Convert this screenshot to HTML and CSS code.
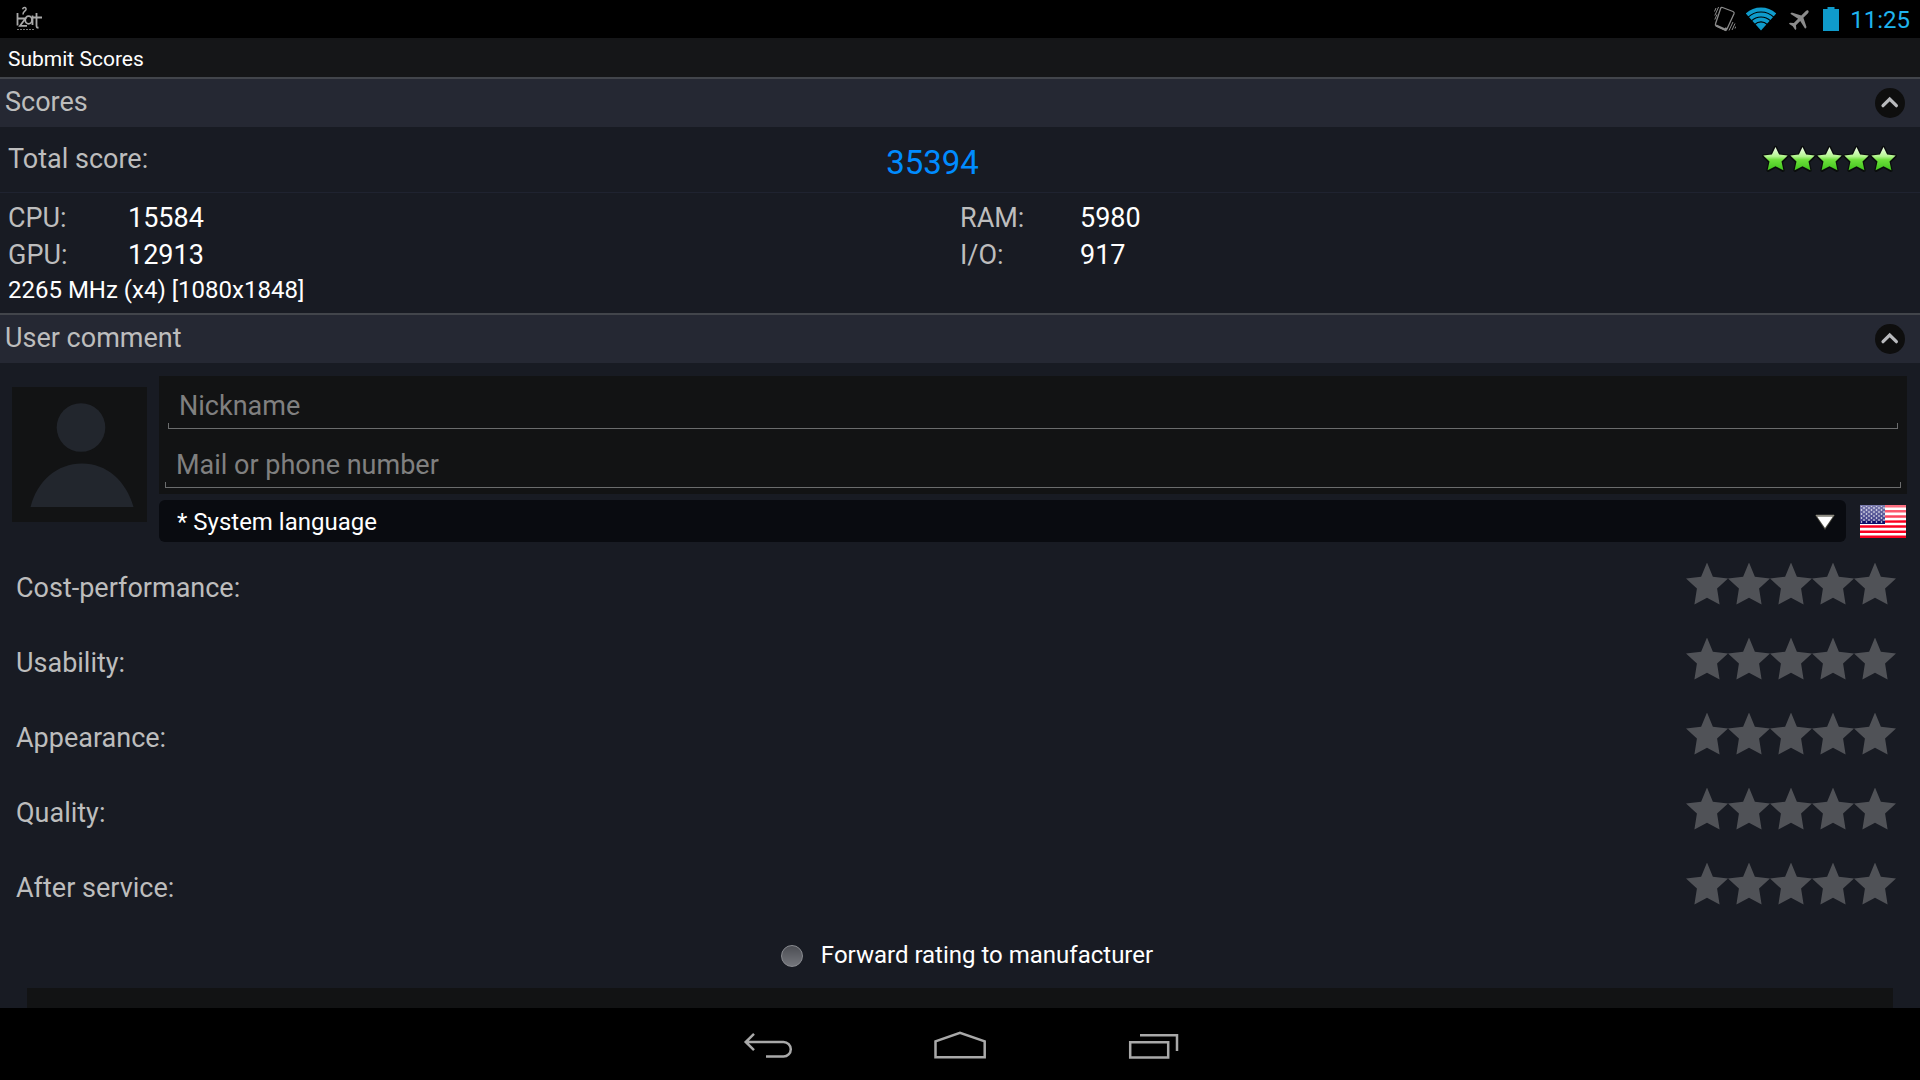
FILE: index.html
```html
<!DOCTYPE html>
<html lang="en">
<head>
<meta charset="utf-8">
<meta name="viewport" content="width=device-width, initial-scale=1">
<title>Submit Scores</title>
<link rel="stylesheet" href="styles.css">
</head>
<body>
<svg class="defs" aria-hidden="true">
  <defs>
    <linearGradient id="green" x1="0" y1="0" x2="0" y2="1">
      <stop offset="0" stop-color="#f4ffec"/>
      <stop offset=".4" stop-color="#b4f590"/>
      <stop offset=".55" stop-color="#6ee03c"/>
      <stop offset="1" stop-color="#3fc41c"/>
    </linearGradient>
    <symbol id="star" viewBox="0 0 27 30">
      <path d="M13.5 2.5l3.4 7.6 8.3.9-6.1 5.8 1.8 8.4-7.4-4.2-7.4 4.2 1.8-8.4L1.8 11l8.3-.9z" fill="none" stroke="#050805" stroke-width="3.4" stroke-linejoin="round" opacity=".75"/>
      <path d="M13.5 2l3.6 7.600 8.600.900-6.200 6 1.900 8.700-7.900-4-7.900 4 1.900-8.700L1.300 10.500l8.600-.900z" fill="url(#green)"/>
    </symbol>
    <symbol id="chevron" viewBox="0 0 30 30">
      <path d="M8 17.700l6.700-6.700 6.700 6.700" fill="none" stroke="#b9babd" stroke-width="3.200" stroke-linecap="round"/>
    </symbol>
  </defs>
</svg>

<header class="status">
  <svg class="status-logo" width="26" height="26" viewBox="0 0 26 26" fill="none" stroke="#a9a9a9" stroke-width="1.8" role="img" aria-label="IZat">
    <path d="M1.500 7v12.500M2 12.500h7.500L4 19.800h7"/>
    <ellipse cx="12.600" cy="14" rx="3.400" ry="3.800"/>
    <path d="M16.500 9.500v9.500M20.500 7v12.500c0 1.800.6 2.300 2 2M17 11.500H26"/>
    <path d="M6.500 3.200c1-2.500 4-2 3.500.300C9.500 5.500 7 5 7 8.500" stroke-width="1.500"/>
    <path d="M1 23.500h17" stroke-width="1.200" stroke-dasharray="2 1" opacity=".7"/>
  </svg>
  <div class="status-icons">
    <svg width="22" height="26" viewBox="0 0 22 26" fill="none" stroke="#8b8b8b" role="img" aria-label="Vibrate">
      <path d="M8.500 1.500l10.500 4q1.600.7 1 2.200L13 23q-.7 1.500-2.200 1L2.300 20q-1.400-.7-.8-2.200L6.700 2.300q.5-1.300 1.800-.8z" stroke-width="1.300"/>
      <path d="M2 19.500l9.500 4.200 1-2" stroke-width="2.200"/>
      <path d="M.5 5.500l1.500-3.500M.8 9.500L4.600 1M.8 13.500L3 8.500M15 24.500l4-8.500M18 24l3-6.500M21 22.500l.8-2"/>
    </svg>
    <svg width="30" height="24" viewBox="0 0 30 24" role="img" aria-label="Wi-Fi">
      <clipPath id="fan"><path d="M15 23.500L-3 3.500V-2H33V3.500z"/></clipPath>
      <g clip-path="url(#fan)" fill="none" stroke="#0f9bcb" stroke-width="3.800">
        <circle cx="15" cy="23.500" r="21"/>
        <circle cx="15" cy="23.500" r="16"/>
        <circle cx="15" cy="23.500" r="11.200"/>
        <circle cx="15" cy="23.500" r="4" stroke-width="8"/>
      </g>
    </svg>
    <svg width="27" height="27" viewBox="0 0 27 27" role="img" aria-label="Airplane mode">
      <path transform="rotate(45 13.500 13.500) translate(2 1)" fill="#8b8b8b" d="M22 15v-2L13 8.500V2c0-1-.67-2-1.500-2S10 1 10 2v6.500L1 13v2l9-2V19l-3 2.500v1.500l4.500-1 4.500 1v-1.500L13 19v-6z"/>
    </svg>
    <svg width="16" height="24" viewBox="0 0 16 24" role="img" aria-label="Battery full">
      <path fill="#0f9bcb" d="M4.500 0h7v2H16v22H0V2h4.500z"/>
    </svg>
    <time class="clock">11:25</time>
  </div>
</header>

<h1 class="title">Submit Scores</h1>

<main class="content">
  <section>
    <div class="section-head">
      <h2>Scores</h2>
      <button class="collapse" type="button" aria-label="Collapse scores"><svg width="30" height="30"><use href="#chevron"/></svg></button>
    </div>
    <div class="total">
      <span class="label">Total score:</span>
      <output class="total-value">35394</output>
      <div class="total-stars" role="img" aria-label="5 of 5 stars">
        <svg width="27" height="30"><use href="#star"/></svg>
        <svg width="27" height="30"><use href="#star"/></svg>
        <svg width="27" height="30"><use href="#star"/></svg>
        <svg width="27" height="30"><use href="#star"/></svg>
        <svg width="27" height="30"><use href="#star"/></svg>
      </div>
    </div>
    <div class="details">
      <dl class="metrics">
        <div class="metric"><dt>CPU:</dt><dd>15584</dd></div>
        <div class="metric"><dt>RAM:</dt><dd>5980</dd></div>
        <div class="metric"><dt>GPU:</dt><dd>12913</dd></div>
        <div class="metric"><dt>I/O:</dt><dd>917</dd></div>
      </dl>
      <p class="device">2265 MHz (x4) [1080x1848]</p>
    </div>
  </section>

  <section>
    <div class="section-head">
      <h2>User comment</h2>
      <button class="collapse" type="button" aria-label="Collapse user comment"><svg width="30" height="30"><use href="#chevron"/></svg></button>
    </div>
    <form class="comment">
      <div class="profile">
        <button class="avatar" type="button" aria-label="Choose a picture">
          <svg width="135" height="135" viewBox="0 0 135 135" fill="#22262d">
            <circle cx="69" cy="40.500" r="24.300"/>
            <path d="M18.500 120C25 94 45 76.500 70 76.500S114 94 121.500 120z"/>
          </svg>
        </button>
        <div class="identity">
          <div class="fields">
            <input class="field" type="text" placeholder="Nickname" aria-label="Nickname">
            <input class="field field-wide" type="text" placeholder="Mail or phone number" aria-label="Mail or phone number">
          </div>
          <div class="language">
            <div class="select">
              <select aria-label="Language"><option>* System language</option><option>English</option></select>
              <svg class="select-arrow" width="24" height="20" viewBox="0 0 24 20" aria-hidden="true">
                <path d="M2 4h20l-10 15z" fill="#77745f" opacity=".55"/>
                <path d="M4 5.500h16L12 17z" fill="#fff"/>
                <path d="M3 4.500h18" stroke="#8d8b80" stroke-width="1.500"/>
              </svg>
            </div>
            <svg width="46" height="33" viewBox="0 0 46 33" role="img" aria-label="United States">
              <defs>
                <pattern id="dots" width="5" height="4" patternUnits="userSpaceOnUse">
                  <circle cx="1.500" cy="1" r=".8" fill="#fff"/><circle cx="4" cy="3" r=".8" fill="#fff"/>
                </pattern>
                <linearGradient id="gloss" x1="0" y1="0" x2="0" y2="1">
                  <stop offset="0" stop-color="#fff" stop-opacity=".45"/><stop offset="1" stop-color="#fff" stop-opacity=".2"/>
                </linearGradient>
              </defs>
              <path fill="#fff" d="M0 0h46v33H0z"/>
              <path stroke="#fb0020" stroke-width="2.540" d="M0 1.270h46M0 6.350h46M0 11.420h46M0 16.500h46M0 21.580h46M0 26.650h46M0 31.730h46"/>
              <path fill="#10106b" d="M0 0h25v19H0z"/>
              <path fill="url(#dots)" d="M0 1h25v17H0z"/>
              <path fill="url(#gloss)" d="M0 0h46v15q-10 1-21 1H0z"/>
            </svg>
          </div>
        </div>
      </div>

      <div class="ratings">
        <div class="rating" role="radiogroup" aria-labelledby="r1">
          <span class="label" id="r1">Cost-performance:</span>
          <div class="stars">
            <input type="radio" name="cost" aria-label="1 star"><input type="radio" name="cost" aria-label="2 stars"><input type="radio" name="cost" aria-label="3 stars"><input type="radio" name="cost" aria-label="4 stars"><input type="radio" name="cost" aria-label="5 stars">
          </div>
        </div>
        <div class="rating" role="radiogroup" aria-labelledby="r2">
          <span class="label" id="r2">Usability:</span>
          <div class="stars">
            <input type="radio" name="usability" aria-label="1 star"><input type="radio" name="usability" aria-label="2 stars"><input type="radio" name="usability" aria-label="3 stars"><input type="radio" name="usability" aria-label="4 stars"><input type="radio" name="usability" aria-label="5 stars">
          </div>
        </div>
        <div class="rating" role="radiogroup" aria-labelledby="r3">
          <span class="label" id="r3">Appearance:</span>
          <div class="stars">
            <input type="radio" name="appearance" aria-label="1 star"><input type="radio" name="appearance" aria-label="2 stars"><input type="radio" name="appearance" aria-label="3 stars"><input type="radio" name="appearance" aria-label="4 stars"><input type="radio" name="appearance" aria-label="5 stars">
          </div>
        </div>
        <div class="rating" role="radiogroup" aria-labelledby="r4">
          <span class="label" id="r4">Quality:</span>
          <div class="stars">
            <input type="radio" name="quality" aria-label="1 star"><input type="radio" name="quality" aria-label="2 stars"><input type="radio" name="quality" aria-label="3 stars"><input type="radio" name="quality" aria-label="4 stars"><input type="radio" name="quality" aria-label="5 stars">
          </div>
        </div>
        <div class="rating" role="radiogroup" aria-labelledby="r5">
          <span class="label" id="r5">After service:</span>
          <div class="stars">
            <input type="radio" name="service" aria-label="1 star"><input type="radio" name="service" aria-label="2 stars"><input type="radio" name="service" aria-label="3 stars"><input type="radio" name="service" aria-label="4 stars"><input type="radio" name="service" aria-label="5 stars">
          </div>
        </div>
      </div>

      <label class="forward"><input type="checkbox" name="forward"><span>Forward rating to manufacturer</span></label>
      <textarea class="message" aria-label="Comment"></textarea>
    </form>
  </section>
</main>

<nav class="navbar" aria-label="System">
  <button type="button" aria-label="Back">
    <svg width="56" height="32" viewBox="0 0 56 32" fill="none" stroke="#a9a9a9" stroke-width="2.500"><path d="M5.500 14H43.500a7.300 7.300 0 0 1 0 14.600H26M14 5.800L5.700 14l8.300 8.200"/></svg>
  </button>
  <button type="button" aria-label="Home">
    <svg width="56" height="32" viewBox="0 0 56 32" fill="none" stroke="#a9a9a9" stroke-width="2.500"><path d="M3.500 29.200V13.300L28 4.700l24.700 8.600v15.900z"/></svg>
  </button>
  <button type="button" aria-label="Recent apps">
    <svg width="56" height="32" viewBox="0 0 56 32" fill="none" stroke="#a9a9a9" stroke-width="2.500"><path d="M6.200 14.300h38v15.200h-38zM16 7.200h37V23"/></svg>
  </button>
</nav>
</body>
</html>
```
FILE: styles.css
```css
* {
  box-sizing: border-box;
}

body {
  margin: 0;
  height: 100vh;
  display: flex;
  flex-direction: column;
  background: #000;
  color: #fff;
  font: 24px/33px Roboto, "Noto Sans", sans-serif;
}

h1,
h2,
p,
dl,
dd {
  margin: 0;
  font-weight: 400;
}

button {
  padding: 0;
  border: 0;
  background: none;
  cursor: pointer;
}

svg {
  display: block;
  flex: none;
}

.defs {
  position: absolute;
  width: 0;
  height: 0;
}

/* System status bar */
.status {
  flex: none;
  display: flex;
  align-items: center;
  justify-content: space-between;
  height: 38px;
  padding: 0 10px 0 16px;
}

.status-icons {
  display: flex;
  align-items: center;
  gap: 10px;
}

.clock {
  padding: 2px 0 0 1px;
  color: #1fb4ee;
}

.title {
  flex: none;
  padding: 5px 8px 1px;
  background: #151618;
  font-size: 21px;
}

/* Scrolling page */
.content {
  flex: 1;
  min-height: 0;
  overflow: hidden auto;
  scrollbar-width: none;
  background: #181b23;
}

.section-head {
  display: flex;
  align-items: center;
  justify-content: space-between;
  height: 50px;
  padding: 0 15px 0 5px;
  border-top: 2px solid #42454b;
  background: #252833;
}

.section-head h2 {
  padding-bottom: 2px;
  color: #bdbdbd;
  font-size: 27px;
}

.collapse {
  border-radius: 50%;
  background: #0e0e0e;
}

.label {
  color: #bdbdbd;
  font-size: 27px;
  white-space: nowrap;
}

.total {
  display: grid;
  grid-template-columns: 140px 1fr 180px;
  align-items: center;
  height: 66px;
  padding: 0 23px 0 8px;
  border-bottom: 1px solid #1f2330;
}

.total-value {
  padding-top: 6px;
  color: #008cff;
  font-size: 33px;
  text-align: center;
}

.total-stars {
  display: flex;
  justify-content: flex-end;
}

.details {
  padding: 7px 0 6px;
}

.metrics {
  display: grid;
  grid-template-columns: 1fr 1fr;
  font-size: 27px;
  line-height: 37px;
}

.metric {
  display: grid;
  grid-template-columns: 120px 1fr;
  padding-left: 8px;
}

.metric:nth-child(even) {
  padding-left: 0;
}

.metric dt {
  color: #bdbdbd;
}

.device {
  padding-left: 8px;
}

/* Comment form */
.profile {
  display: flex;
  gap: 12px;
  padding: 13px 13px 0 12px;
}

.avatar {
  flex: none;
  align-self: flex-start;
  margin-top: 11px;
  background: #121314;
}

.identity {
  flex: 1;
  display: flex;
  flex-direction: column;
  gap: 6px;
}

.fields {
  display: flex;
  flex-direction: column;
  gap: 6px;
  padding: 0 9px 6px;
  background: #121314;
}

.field {
  --line: linear-gradient(#6b6c6d, #6b6c6d) no-repeat;
  height: 53px;
  padding: 13px 11px 7px;
  border: 0;
  outline: 0;
  background:
    var(--line) left bottom / 100% 1px,
    var(--line) left bottom / 1px 6px,
    var(--line) right bottom / 1px 6px;
  color: #fff;
  font: inherit;
  font-size: 27px;
}

.field::placeholder {
  color: #808080;
  opacity: 1;
}

.field-wide {
  margin: 0 -3px;
}

.language {
  display: flex;
  align-items: center;
  gap: 14px;
  padding-right: 1px;
}

.select {
  flex: 1;
  display: grid;
  align-items: center;
}

.select > * {
  grid-area: 1 / 1;
}

.select select {
  appearance: none;
  height: 42px;
  padding: 2px 18px 0;
  border: 0;
  border-radius: 6px;
  background: #090b10;
  color: #fff;
  font: inherit;
}

.select-arrow {
  justify-self: end;
  margin-right: 9px;
  pointer-events: none;
}

.ratings {
  padding: 4px 24px 0 16px;
}

.rating {
  display: flex;
  align-items: center;
  justify-content: space-between;
  height: 75px;
}

.rating .label {
  padding-top: 10px;
}

.stars {
  display: flex;
}

.stars input {
  appearance: none;
  width: 42px;
  height: 42px;
  margin: 0;
  background: #505257;
  clip-path: polygon(50% 0, 64% 34%, 100% 38%, 74% 62%, 80% 100%, 50% 84%, 20% 100%, 26% 62%, 0 38%, 36% 34%);
  cursor: pointer;
}

.stars input:has(~ input:checked),
.stars input:checked {
  background: #6ee03c;
}

.forward {
  display: flex;
  align-items: center;
  justify-content: center;
  gap: 18px;
  width: fit-content;
  margin: 18px auto 16px;
  padding-left: 14px;
}

.forward input {
  appearance: none;
  width: 22px;
  height: 22px;
  margin: 0;
  border: 1px solid #8a8c91;
  border-radius: 50%;
  background: linear-gradient(#4c4e54, #74767c);
}

.forward input:checked {
  background: #33b5e5;
}

.message {
  display: block;
  width: calc(100% - 54px);
  height: 180px;
  margin: 0 27px 24px;
  padding: 12px;
  border: 0;
  resize: none;
  background: #121314;
  color: #fff;
  font: inherit;
}

/* System navigation bar */
.navbar {
  flex: none;
  display: flex;
  justify-content: center;
  height: 72px;
}

.navbar button {
  display: flex;
  align-items: center;
  justify-content: center;
  width: 192px;
}
```
